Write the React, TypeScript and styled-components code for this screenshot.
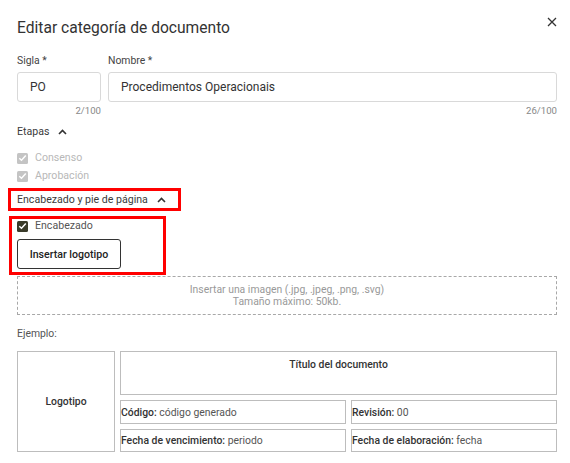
import React from "react";
import styled, { createGlobalStyle } from "styled-components";

const Global = createGlobalStyle`
  html, body { margin: 0; padding: 0; background: #fff; }
  body { font-family: Roboto, "Liberation Sans", sans-serif; color: #333; }
  * { box-sizing: border-box; }
`;

const Dialog = styled.div`
  width: 570px;
  height: 463px;
  overflow: hidden;
  padding: 18px 13px 0 17px;
`;

const Header = styled.div`
  display: flex;
  align-items: flex-start;
  justify-content: space-between;
  height: 20px;
`;

const Title = styled.h1`
  margin: 0;
  font-size: 15.6px;
  font-weight: 400;
  color: #333;
  line-height: 20px;
`;

const Close = styled.button`
  border: 0;
  background: none;
  padding: 0;
  width: 10px;
  height: 10px;
  display: flex;
  margin-top: -1px;
  cursor: pointer;
`;

const FieldRow = styled.div`
  display: flex;
  gap: 7px;
  margin-top: 16px;
`;

const Field = styled.div<{ $w?: number }>`
  display: flex;
  flex-direction: column;
  ${(p) => (p.$w ? `width: ${p.$w}px;` : "flex: 1;")}
`;

const Label = styled.label`
  font-size: 10.4px;
  color: #444;
  line-height: 13px;
  margin-bottom: 5px;
`;

const Input = styled.div`
  height: 30px;
  border: 1px solid #d9d9d9;
  border-radius: 3px;
  display: flex;
  align-items: center;
  padding-left: 12px;
  font-size: 12px;
  color: #333;
`;

const Counter = styled.div`
  text-align: right;
  font-size: 9.6px;
  color: #888;
  margin-top: 3px;
  line-height: 12px;
`;

const SectionToggle = styled.div`
  display: flex;
  align-items: center;
  gap: 9px;
  font-size: 10.6px;
  color: #3a3a3a;
  line-height: 13px;
`;

const Etapas = styled(SectionToggle)`
  margin-top: 8px;
`;

const CheckList = styled.div`
  display: flex;
  flex-direction: column;
  gap: 4px;
  margin-top: 13px;
`;

const CheckRow = styled.div<{ $disabled?: boolean }>`
  display: flex;
  align-items: center;
  gap: 7px;
  font-size: 10.6px;
  line-height: 14px;
  color: ${(p) => (p.$disabled ? "#b8b8b8" : "#555")};
`;

const Box = styled.span<{ $disabled?: boolean }>`
  width: 11px;
  height: 11px;
  border-radius: 1.5px;
  background: ${(p) => (p.$disabled ? "#c4c4c4" : "#3a3b2a")};
  display: inline-flex;
  align-items: center;
  justify-content: center;
`;

const Highlight = styled.div`
  border: 3px solid #f00;
  margin-left: -9px;
`;

const FooterToggle = styled(Highlight)`
  width: 173px;
  height: 23px;
  margin-top: 5px;
  padding-left: 6px;
  display: flex;
  align-items: center;
`;

const HeaderBlock = styled(Highlight)`
  width: 157px;
  height: 59px;
  margin-top: 5px;
  margin-left: -8px;
  padding: 0 0 0 5px;
  display: flex;
  flex-direction: column;
  gap: 6px;
`;

const OutlineButton = styled.button`
  width: 104px;
  height: 30px;
  border: 1px solid #333;
  border-radius: 3px;
  background: #fff;
  font-family: inherit;
  font-size: 10.6px;
  font-weight: 500;
  color: #222;
  padding: 0;
`;

const Dropzone = styled.div`
  border: 1px dashed #a8a8a8;
  height: 39px;
  margin-top: 1px;
  display: flex;
  flex-direction: column;
  align-items: center;
  justify-content: center;
  font-size: 10.4px;
  line-height: 12px;
  color: #999;
`;

const Example = styled.div`
  font-size: 10.4px;
  color: #555;
  margin-top: 12px;
  line-height: 13px;
`;

const Sheet = styled.div`
  display: grid;
  grid-template-columns: 98px 226px 206px;
  grid-template-rows: 44px 24px 23px;
  gap: 5px;
  margin-top: 11px;
`;

const Cell = styled.div<{ $bold?: boolean; $center?: boolean; $top?: boolean }>`
  border: 1px solid #bdbdbd;
  font-size: 10.4px;
  line-height: 13px;
  color: #555;
  display: flex;
  align-items: ${(p) => (p.$top ? "flex-start" : "center")};
  justify-content: ${(p) => (p.$center ? "center" : "flex-start")};
  font-weight: ${(p) => (p.$bold ? 500 : 400)};
  padding-top: ${(p) => (p.$top ? "6px" : "0")};
  ${(p) => (p.$bold ? "color: #333;" : "")}
  b { font-weight: 500; color: #333; }
`;

const LogoCell = styled(Cell)`
  grid-row: 1 / span 3;
  grid-column: 1;
`;

const TitleCell = styled(Cell)`
  grid-column: 2 / span 2;
`;

const Chevron = () => (
  <svg width="9" height="6" viewBox="0 0 9 6">
    <path d="M1 5 L4.5 1.5 L8 5" fill="none" stroke="#333" strokeWidth="1.6" />
  </svg>
);

const Tick = () => (
  <svg width="9" height="8" viewBox="0 0 9 8">
    <path d="M1.3 4.2 L3.5 6.2 L7.8 1.6" fill="none" stroke="#fff" strokeWidth="1.5" />
  </svg>
);

export default function App() {
  return (
    <>
      <Global />
      <Dialog>
        <Header>
          <Title>Editar categoría de documento</Title>
          <Close aria-label="Cerrar">
            <svg width="10" height="10" viewBox="0 0 10 10">
              <path d="M1 1 L9 9 M9 1 L1 9" stroke="#333" strokeWidth="1.3" />
            </svg>
          </Close>
        </Header>
        <FieldRow>
          <Field $w={84}>
            <Label>Sigla *</Label>
            <Input>PO</Input>
            <Counter>2/100</Counter>
          </Field>
          <Field>
            <Label>Nombre *</Label>
            <Input>Procedimentos Operacionais</Input>
            <Counter>26/100</Counter>
          </Field>
        </FieldRow>
        <Etapas>
          Etapas <Chevron />
        </Etapas>
        <CheckList>
          <CheckRow $disabled>
            <Box $disabled><Tick /></Box>Consenso
          </CheckRow>
          <CheckRow $disabled>
            <Box $disabled><Tick /></Box>Aprobación
          </CheckRow>
        </CheckList>
        <FooterToggle>
          <SectionToggle>
            Encabezado y pie de página <Chevron />
          </SectionToggle>
        </FooterToggle>
        <HeaderBlock>
          <CheckRow>
            <Box><Tick /></Box>Encabezado
          </CheckRow>
          <OutlineButton>Insertar logotipo</OutlineButton>
        </HeaderBlock>
        <Dropzone>
          <span>Insertar una imagen (.jpg, .jpeg, .png, .svg)</span>
          <span>Tamaño máximo: 50kb.</span>
        </Dropzone>
        <Example>Ejemplo:</Example>
        <Sheet>
          <LogoCell $bold $center>Logotipo</LogoCell>
          <TitleCell $bold $center $top>Título del documento</TitleCell>
          <Cell><b>Código:</b>&nbsp;código generado</Cell>
          <Cell><b>Revisión:</b>&nbsp;00</Cell>
          <Cell><b>Fecha de vencimiento:</b>&nbsp;periodo</Cell>
          <Cell><b>Fecha de elaboración:</b>&nbsp;fecha</Cell>
        </Sheet>
      </Dialog>
    </>
  );
}
